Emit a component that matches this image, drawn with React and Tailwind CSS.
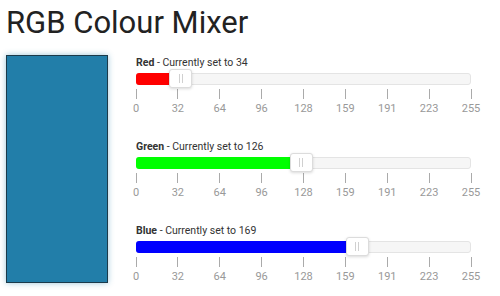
import React from "react";

const ticks = [0, 32, 64, 96, 128, 159, 191, 223, 255];

const channels = [
  { name: "Red", value: 34, color: "bg-[#ff0000]" },
  { name: "Green", value: 126, color: "bg-[#00ff00]" },
  { name: "Blue", value: 169, color: "bg-[#0000ff]" },
];

const Slider = ({ name, value, color }) => {
  const pct = (value / 255) * 100;
  return (
    <div className="flex flex-col">
      <p className="text-[10.5px] leading-[15px] text-[#333]">
        <span className="font-bold">{name}</span> - Currently set to {value}
      </p>
      <div className="relative mt-[3px] h-[12px] w-[335px] rounded-[3px] border border-[#e4e4e4] bg-[#f6f6f6]">
        <div
          className={`absolute left-[-1px] top-[-1px] h-[12px] rounded-l-[3px] ${color}`}
          style={{ width: `${pct}%` }}
        />
        <div
          className="absolute top-[-5px] flex h-[19px] w-[23px] items-center justify-center gap-[2px] rounded-[3px] border border-[#dcdcdc] bg-white shadow-[0_1px_3px_rgba(0,0,0,0.15)]"
          style={{ left: `calc(${pct}% - 12px)` }}
        >
          <span className="h-[9px] w-px bg-[#d0d0d0]" />
          <span className="h-[9px] w-px bg-[#d0d0d0]" />
        </div>
      </div>
      <div className="mt-[4px] flex w-[335px] justify-between">
        {ticks.map((t) => (
          <div key={t} className="flex w-0 flex-col items-center">
            <span className="h-[10px] w-px shrink-0 bg-[#aaa]" />
            <span className="mt-[4px] text-[11px] leading-[12px] text-[#999]">{t}</span>
          </div>
        ))}
      </div>
    </div>
  );
};

export default function App() {
  return (
    <div
      className="h-[296px] w-[500px] overflow-hidden bg-white"
      style={{ fontFamily: "Roboto, 'Liberation Sans', sans-serif" }}
    >
      <h1 className="ml-[6px] mt-[5px] text-[31px] leading-[36px] text-[#222]">RGB Colour Mixer</h1>
      <div className="mt-[14px] flex">
        <div className="ml-[6px] h-[228px] w-[102px] border border-[#1b3a4a] bg-[#227ea9] shadow-[0_0_6px_rgba(34,126,169,0.45)]" />
        <div className="ml-[28px] flex flex-col gap-[24px]">
          {channels.map((c) => (
            <Slider key={c.name} {...c} />
          ))}
        </div>
      </div>
    </div>
  );
}
